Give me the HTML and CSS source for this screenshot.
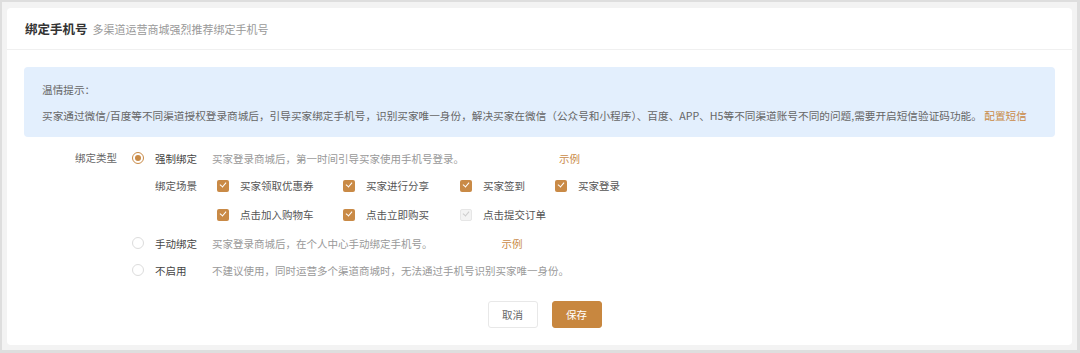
FILE: index.html
```html
<html>
<head>
    <title>绑定手机号</title>
    <link rel="stylesheet" href="styles.css">
</head>
<body>

<div id="frame">
    <div id="card">
        <div id="card-head">
            <span class="title">绑定手机号</span>
            <span class="subtitle">多渠道运营商城强烈推荐绑定手机号</span>
        </div>

        <div id="card-body">
            <div class="tip">
                <div class="tip-title">温情提示：</div>
                <div class="tip-text">买家通过微信/百度等不同渠道授权登录商城后，引导买家绑定手机号，识别买家唯一身份，解决买家在微信（公众号和小程序）、百度、APP、H5等不同渠道账号不同的问题,需要开启短信验证码功能。 <a href="#" class="link">配置短信</a></div>
            </div>

            <div class="form">
                <div class="form-label">绑定类型</div>
                <div class="form-field">
                    <div class="opt-row row-1">
                        <span class="radio checked"></span>
                        <span class="opt-name">强制绑定</span>
                        <span class="opt-desc">买家登录商城后，第一时间引导买家使用手机号登录。</span>
                        <a href="#" class="link example ex-1">示例</a>
                    </div>
                    <div class="scene">
                        <span class="scene-label">绑定场景</span>
                        <div class="scene-grid">
                            <div class="check-item"><span class="checkbox on"></span>买家领取优惠券</div>
                            <div class="check-item"><span class="checkbox on"></span>买家进行分享</div>
                            <div class="check-item"><span class="checkbox on"></span>买家签到</div>
                            <div class="check-item"><span class="checkbox on"></span>买家登录</div>
                            <div class="check-item"><span class="checkbox on"></span>点击加入购物车</div>
                            <div class="check-item"><span class="checkbox on"></span>点击立即购买</div>
                            <div class="check-item"><span class="checkbox disabled"></span>点击提交订单</div>
                        </div>
                    </div>
                    <div class="opt-row row-4">
                        <span class="radio"></span>
                        <span class="opt-name">手动绑定</span>
                        <span class="opt-desc">买家登录商城后，在个人中心手动绑定手机号。</span>
                        <a href="#" class="link example ex-4">示例</a>
                    </div>
                    <div class="opt-row row-5">
                        <span class="radio"></span>
                        <span class="opt-name">不启用</span>
                        <span class="opt-desc">不建议使用，同时运营多个渠道商城时，无法通过手机号识别买家唯一身份。</span>
                    </div>
                </div>
            </div>

            <div class="actions">
                <span class="btn">取消</span>
                <span class="btn primary">保存</span>
            </div>
        </div>
    </div>
</div>

</body>
</html>
```

FILE: styles.css
```css
body {
    margin: 0;
    background: #f2f2f2;
    font-family: "Noto Sans CJK SC", "Noto Sans", sans-serif;
    font-size: 10.5px;
    color: #555555;
}

a {
    text-decoration: none;
}

.link {
    color: #c98a46;
}

#frame {
    box-sizing: border-box;
    width: 1080px;
    height: 353px;
    padding: 6px 5px 5px 5px;
    border-top: 2px solid #dedede;
    border-left: 2px solid #dedede;
    border-right: 3px solid #dedede;
    border-bottom: 3px solid #dedede;
    background: #f3f3f3;
}

#card {
    height: 337px;
    background: #ffffff;
    border-radius: 4px;
}

#card-head {
    box-sizing: border-box;
    height: 42px;
    padding-left: 18px;
    display: flex;
    align-items: center;
    border-bottom: 1px solid #f0f0f0;
}

.title {
    font-size: 12.5px;
    font-weight: bold;
    color: #333333;
}

.subtitle {
    margin-left: 5px;
    font-size: 11px;
    color: #999999;
}

#card-body {
    padding: 17px 17px 0 17px;
}

/* tip box */
.tip {
    height: 70px;
    box-sizing: border-box;
    padding: 14px 18px 0 18px;
    background: #e3effd;
    border-radius: 4px;
    color: #666666;
    font-size: 10.65px;
}

.tip-title {
    line-height: 18px;
}

.tip-text {
    margin-top: 8px;
    line-height: 18px;
    white-space: nowrap;
}

/* form */
.form {
    display: flex;
    margin-top: 8px;
}

.form-label {
    width: 93px;
    text-align: right;
    line-height: 26px;
    color: #666666;
}

.form-field {
    margin-left: 15px;
}

.opt-row {
    display: flex;
    align-items: center;
}

.row-1 {
    height: 26px;
}
.row-4 {
    height: 28px;
}
.row-5 {
    height: 26px;
}

.radio {
    box-sizing: border-box;
    width: 12px;
    height: 12px;
    border-radius: 50%;
    border: 1px solid #dcdcdc;
    background: #ffffff;
    display: flex;
    align-items: center;
    justify-content: center;
}

.radio.checked {
    border-color: #c98a46;
}

.radio.checked::after {
    content: "";
    width: 6px;
    height: 6px;
    border-radius: 50%;
    background: #c98a46;
}

.opt-name {
    width: 57px;
    margin-left: 11px;
    color: #444444;
}

.opt-desc {
    color: #999999;
}

.ex-1 {
    margin-left: 95px;
}
.ex-4 {
    margin-left: 69px;
}

/* bind scene */
.scene {
    display: flex;
    margin-left: 23px;
}

.scene-label {
    width: 62px;
    line-height: 29px;
    color: #555555;
}

.scene-grid {
    display: grid;
    grid-template-columns: 126px 117px 95px auto;
    grid-auto-rows: 29px;
}

.check-item {
    display: flex;
    align-items: center;
    color: #555555;
}

.checkbox {
    box-sizing: border-box;
    width: 12px;
    height: 12px;
    margin-right: 11px;
    border-radius: 2px;
    position: relative;
}

.checkbox::after {
    content: "";
    position: absolute;
    left: 3.5px;
    top: 1.5px;
    width: 3px;
    height: 5px;
    border-right: 1.4px solid #ffffff;
    border-bottom: 1.4px solid #ffffff;
    transform: rotate(40deg);
}

.checkbox.on {
    background: #c98a46;
}

.checkbox.disabled {
    background: #f3f3f3;
    border: 1px solid #e6e6e6;
}

.checkbox.disabled::after {
    left: 2.5px;
    top: 0.5px;
    border-color: #cccccc;
}

/* buttons */
.actions {
    display: flex;
    justify-content: center;
    margin-top: 18px;
    padding-left: 10px;
}

.btn {
    box-sizing: border-box;
    width: 50px;
    height: 27px;
    line-height: 25px;
    text-align: center;
    border: 1px solid #e8e8e8;
    border-radius: 3px;
    background: #ffffff;
    color: #666666;
    margin: 0 7px;
}

.btn.primary {
    background: #c8873f;
    border-color: #c8873f;
    color: #ffffff;
}
```
